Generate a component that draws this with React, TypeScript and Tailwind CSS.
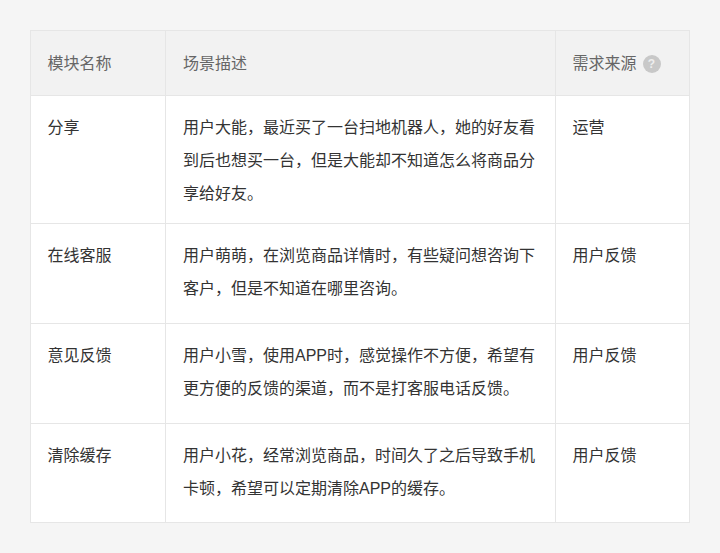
const rows = [
  {
    name: "分享",
    desc: "用户大能，最近买了一台扫地机器人，她的好友看到后也想买一台，但是大能却不知道怎么将商品分享给好友。",
    from: "运营",
    h: "h-[128px]",
  },
  {
    name: "在线客服",
    desc: "用户萌萌，在浏览商品详情时，有些疑问想咨询下客户，但是不知道在哪里咨询。",
    from: "用户反馈",
    h: "h-[100px]",
  },
  {
    name: "意见反馈",
    desc: "用户小雪，使用APP时，感觉操作不方便，希望有更方便的反馈的渠道，而不是打客服电话反馈。",
    from: "用户反馈",
    h: "h-[100px]",
  },
  {
    name: "清除缓存",
    desc: "用户小花，经常浏览商品，时间久了之后导致手机卡顿，希望可以定期清除APP的缓存。",
    from: "用户反馈",
    h: "h-[99px]",
  },
];

export default function App() {
  return (
    <main className="min-h-[553px] bg-[#f5f5f5] px-[30px] pt-[30px] font-['Liberation_Sans','Noto_Sans_CJK_SC',sans-serif] text-[16px]">
      <table className="w-[659px] table-fixed border-collapse bg-white text-[#333]">
        <thead>
          <tr className="h-[65px] bg-[#f2f2f2] text-[#666]">
            <th className="w-[135px] border border-[#e6e6e6] px-[16.5px] pt-[2px] text-left font-normal">模块名称</th>
            <th className="w-[390px] border border-[#e6e6e6] px-[17px] pt-[2px] text-left font-normal">场景描述</th>
            <th className="w-[134px] border border-[#e6e6e6] px-[16.5px] pt-[2px] text-left font-normal">
              <span className="flex items-center gap-[6px]">
                需求来源
                <span className="flex h-[18px] w-[18px] items-center justify-center rounded-full bg-[#c8c8c8] text-[12px] font-bold text-[#eeeeee]">
                  ?
                </span>
              </span>
            </th>
          </tr>
        </thead>
        <tbody>
          {rows.map((r) => (
            <tr key={r.name} className={r.h}>
              <td className="border border-[#e6e6e6] px-[16.5px] pt-[15px] align-top leading-[33px]">{r.name}</td>
              <td className="border border-[#e6e6e6] px-[17px] pt-[15px] align-top leading-[33px]">{r.desc}</td>
              <td className="border border-[#e6e6e6] px-[16.5px] pt-[15px] align-top leading-[33px]">{r.from}</td>
            </tr>
          ))}
        </tbody>
      </table>
    </main>
  );
}
